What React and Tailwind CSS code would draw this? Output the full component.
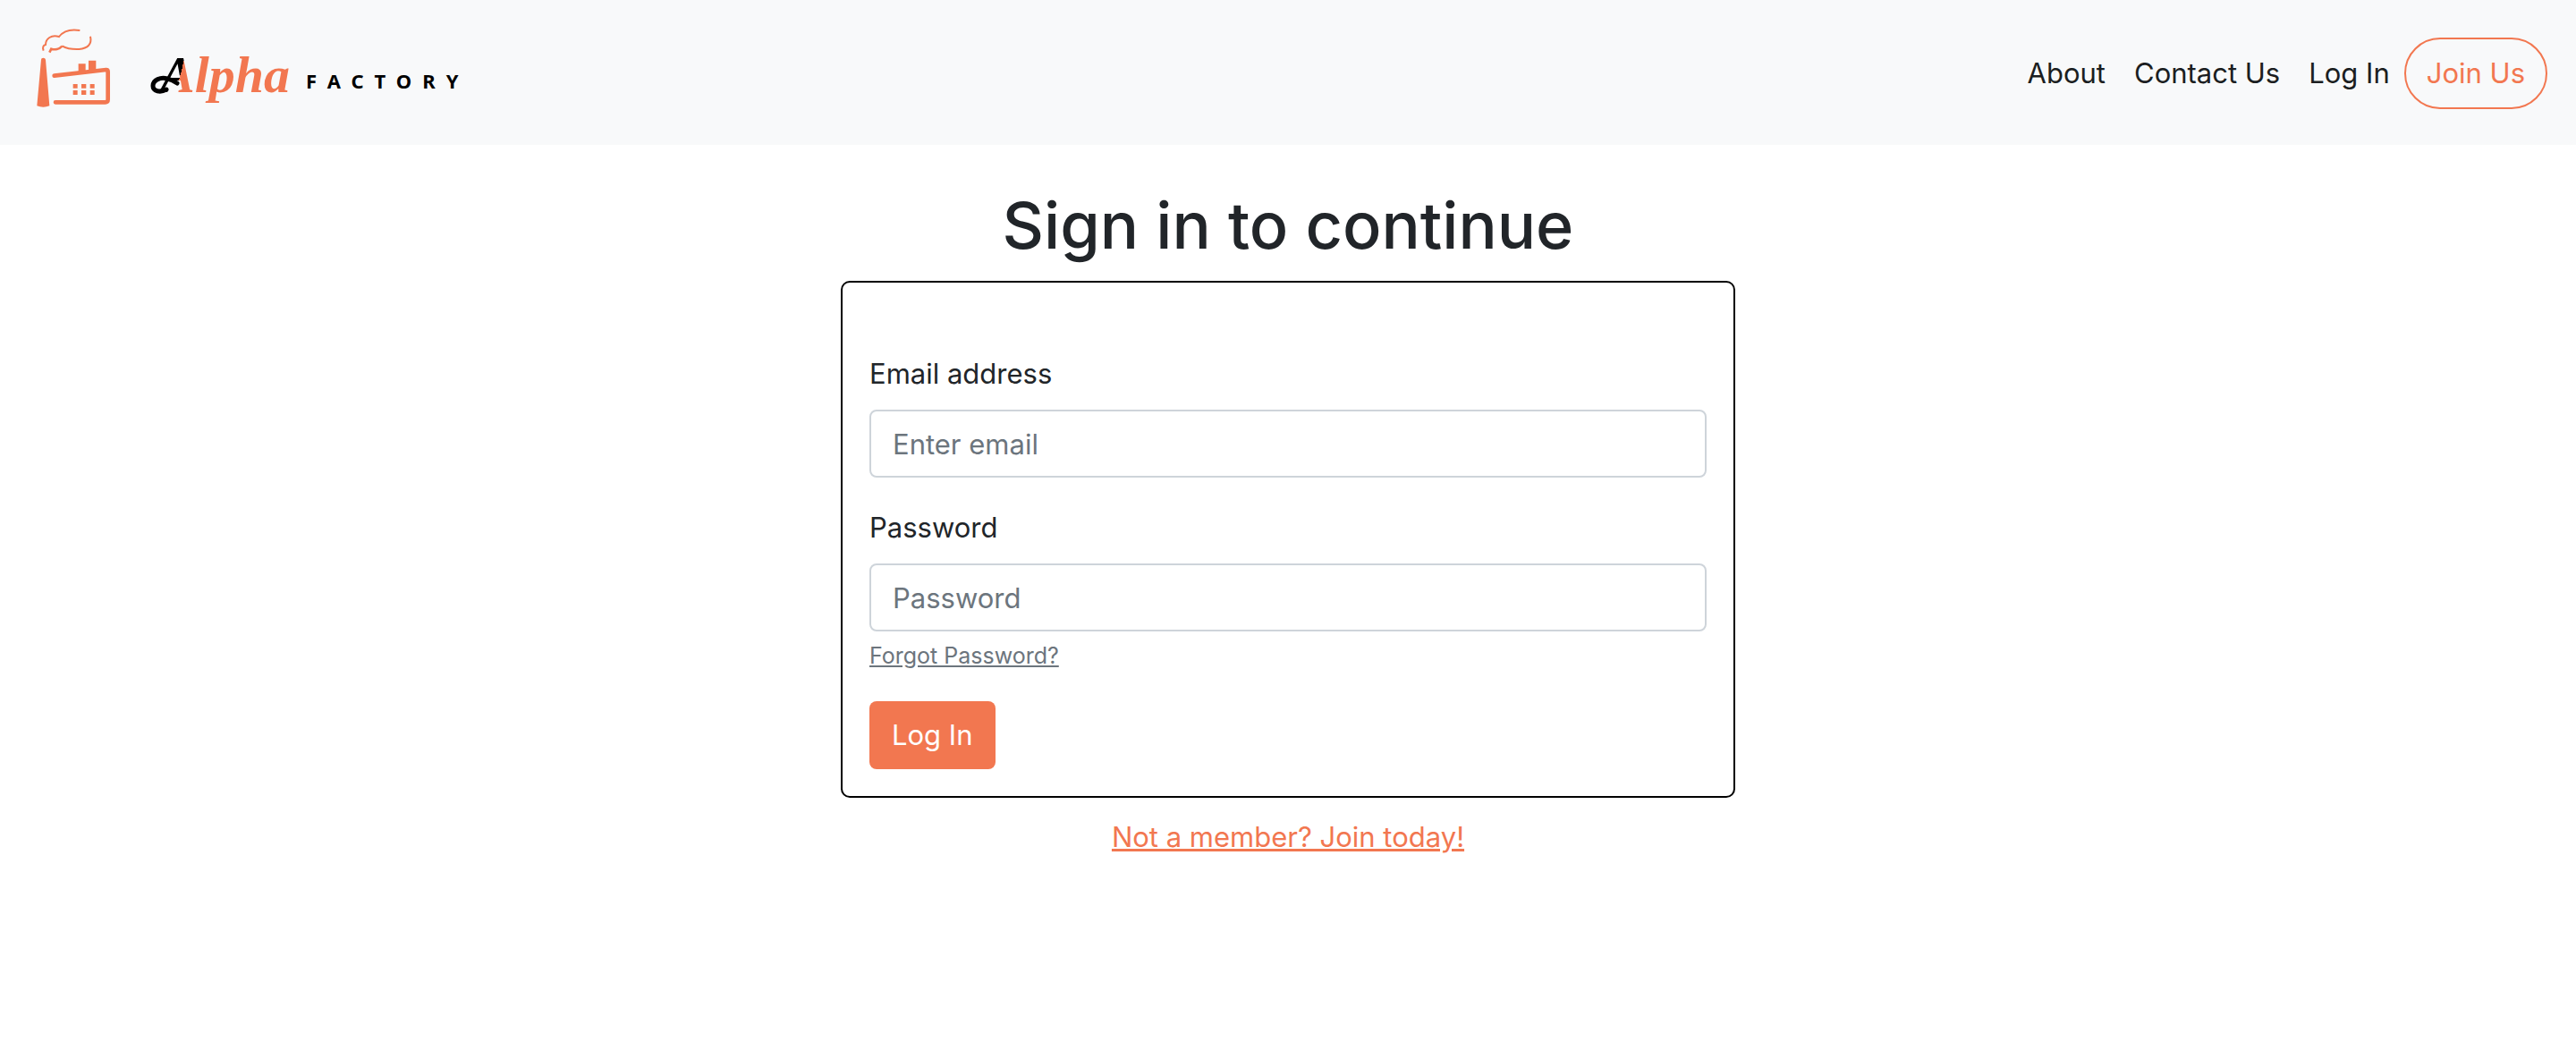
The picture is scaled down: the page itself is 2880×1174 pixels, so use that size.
import React from "react";

function Brand() {
  return (
    <a href="#home" aria-label="Alpha Factory">
      <svg viewBox="0 0 520 92" className="h-[92px] w-[520px]">
        <defs>
          <linearGradient id="split" gradientUnits="userSpaceOnUse" x1="152" y1="50" x2="172" y2="55">
            <stop offset="0.5" stopColor="#000" />
            <stop offset="0.5" stopColor="#f27750" />
          </linearGradient>
        </defs>
        <g transform="translate(-20 -20) scale(0.3333)">
          <g fill="none" stroke="#f27750">
            <path strokeWidth="6" d="M86 140 C81 126 87 121 93 120 C93 100 112 85 138 93 C154 72 178 67 208 72" />
            <path strokeWidth="6" d="M243 92 C249 118 235 132 205 135 C183 136 164 133 148 124" />
            <path strokeWidth="8" d="M148 125 C139 135 124 138 112 134 L106 146" />
            <path
              strokeWidth="14"
              strokeLinecap="round"
              strokeLinejoin="round"
              d="M122 224 L296 204 Q302 204 302 210 V304 Q302 313 293 313 H126"
            />
          </g>
          <g fill="#f27750">
            <path d="M78 170 Q78 164 85 164 Q92 164 93 170 L106 325 Q85 333 64 325 Z" />
            <path d="M203 184 H227 V214 H203 Z M237 173 H262 V212 H237 Z" />
            <path d="M185 252h15v14h-15z M213 252h16v14h-16z M242 252h15v14h-15z M185 273h15v15h-15z M213 273h16v15h-16z M242 273h15v15h-15z" />
          </g>
        </g>
        <path
          fill="none"
          stroke="#000"
          strokeWidth="5"
          strokeLinecap="round"
          d="M146 70 C139 74 131 72 131 66 C131 59 140 56 147 58 C152 59 155 61 158 63"
        />
        <text
          x="139"
          y="73"
          fontSize="58"
          fill="url(#split)"
          className="font-['Liberation_Serif',serif] font-bold italic"
        >
          Alpha
        </text>
        <text
          x="302"
          y="69"
          fontSize="22"
          className="font-['Noto_Sans',sans-serif] font-bold tracking-[12px]"
        >
          FACTORY
        </text>
      </svg>
    </a>
  );
}

function Field({ id, label, ...props }) {
  return (
    <div>
      <label htmlFor={id} className="mb-4 block">
        {label}
      </label>
      <input
        id={id}
        className="block h-[76px] w-full rounded-lg border-2 border-[#ced4da] bg-white px-6 text-[#212529] placeholder:text-[#6c757d]"
        {...props}
      />
    </div>
  );
}

export default function App() {
  return (
    <div className="min-h-screen bg-white font-[Inter,sans-serif] text-[31px] leading-[48px] text-[#212529]">
      <header className="flex items-start justify-between bg-[#f8f9fa] pt-[30px] pr-8 pb-10 pl-10">
        <Brand />
        <nav className="mt-3 flex items-center gap-8 text-[#1b1e21]">
          <a href="#about">About</a>
          <a href="#contact">Contact Us</a>
          <div className="flex items-center gap-4">
            <a href="#login">Log In</a>
            <a
              href="#join"
              className="flex h-20 items-center rounded-[40px] border-2 border-[#f27750] px-[23px] text-[#f27750]"
            >
              Join Us
            </a>
          </div>
        </nav>
      </header>
      <main className="mx-auto w-full max-w-[1000px] pt-[42px]">
        <h1 className="mb-[14px] text-center text-[72px] leading-[96px] font-medium">Sign in to continue</h1>
        <form
          className="flex flex-col gap-8 rounded-[10px] border-2 border-black px-[30px] pt-[78px] pb-[30px]"
          onSubmit={(e) => e.preventDefault()}
        >
          <Field id="email" label="Email address" type="email" placeholder="Enter email" />
          <div>
            <Field id="password" label="Password" type="password" placeholder="Password" />
            <a href="#forgot" className="mt-1.5 block w-fit text-[25px] leading-[42px] text-[#6c757d] underline">
              Forgot Password?
            </a>
          </div>
          <button
            type="submit"
            className="-mt-0.5 h-[76px] w-fit rounded-lg bg-[#f27750] px-[25px] text-white"
          >
            Log In
          </button>
        </form>
        <p className="mt-5 text-center">
          <a href="#join" className="text-[#f27750] underline">
            Not a member? Join today!
          </a>
        </p>
      </main>
    </div>
  );
}
